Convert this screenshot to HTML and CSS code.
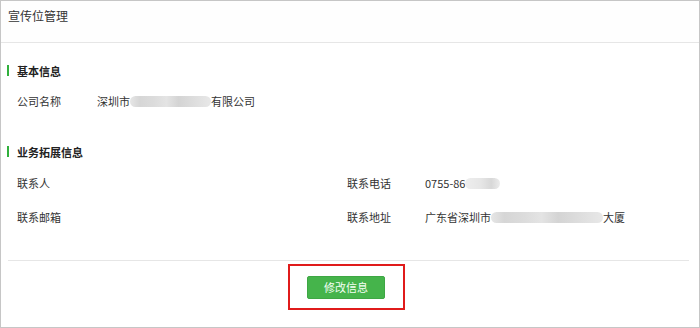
FILE: index.html
```html
<!DOCTYPE html>
<html lang="zh-CN">
<head>
<meta charset="utf-8">
<link rel="stylesheet" href="styles.css">
</head>
<body>
<div class="panel">
  <div class="header"><span class="title">宣传位管理</span></div>
  <div class="body">
    <div class="section-title sec1">基本信息</div>
    <div class="row r1">
      <div class="field">
        <span class="label">公司名称</span>
        <span class="value">深圳市<span class="blur b1"></span>有限公司</span>
      </div>
    </div>
    <div class="section-title sec2">业务拓展信息</div>
    <div class="grid">
      <div class="field">
        <span class="label">联系人</span>
        <span class="value"></span>
      </div>
      <div class="field">
        <span class="label">联系电话</span>
        <span class="value">0755-86<span class="blur b2"></span></span>
      </div>
      <div class="field">
        <span class="label">联系邮箱</span>
        <span class="value"></span>
      </div>
      <div class="field">
        <span class="label">联系地址</span>
        <span class="value">广东省深圳市<span class="blur b3"></span>大厦</span>
      </div>
    </div>
    <div class="divider"></div>
    <div class="actions">
      <div class="highlight">
        <button class="btn">修改信息</button>
      </div>
    </div>
  </div>
</div>
</body>
</html>
```

FILE: styles.css
```css
* { box-sizing: border-box; }
html, body {
  margin: 0;
  padding: 0;
  background: #fff;
}
body {
  font-family: "Noto Sans CJK SC", "Noto Sans", sans-serif;
  color: #333;
  font-size: 11px;
}
.panel {
  width: 700px;
  height: 328px;
  border: 1px solid #c6c6c6;
  background: #fff;
}
.header {
  height: 42px;
  border-bottom: 1px solid #e6e6e6;
  padding: 7px 0 0 7px;
  background: #fefefe;
}
.title {
  display: block;
  font-size: 12px;
  line-height: 16px;
  color: #333;
}
.body {
  padding: 0 10px 0 6px;
}
.section-title {
  position: relative;
  height: 20px;
  line-height: 20px;
  padding-left: 10px;
  font-weight: bold;
  font-size: 11px;
  color: #222;
}
.section-title::before {
  content: "";
  position: absolute;
  left: 0;
  top: 4px;
  width: 2px;
  height: 11px;
  background: #30b03c;
}
.sec1 { margin-top: 18px; }
.r1 { margin-top: 10px; }
.sec2 { margin-top: 31px; }
.row, .field {
  height: 20px;
  line-height: 20px;
}
.field {
  display: flex;
  padding-left: 10px;
}
.label {
  width: 80px;
  flex: none;
}
.value {
  display: flex;
  align-items: center;
}
.grid {
  margin-top: 11px;
  display: grid;
  grid-template-columns: 330px 1fr;
  row-gap: 14px;
}
.grid .field:nth-child(even) .label { width: 78px; }
.blur {
  display: inline-block;
  height: 11px;
  border-radius: 6px;
  background: linear-gradient(90deg, #e6e6e6 0%, #d6d6d6 12%, #dcdcdc 30%, #e4e4e4 45%, #d4d4d4 60%, #dedede 80%, #e8e8e8 100%);
}
.b1 { width: 81px; }
.b2 { width: 35px; background: linear-gradient(90deg, #eeeeee 0%, #e6e6e6 45%, #d8d8d8 75%, #ececec 100%); }
.b3 { width: 112px; }
.divider {
  margin-top: 33px;
  margin-left: 1px;
  width: 681px;
  height: 1px;
  background: #e6e6e6;
}
.actions {
  display: flex;
  justify-content: center;
  padding-top: 3px;
  padding-right: 4px;
}
.highlight {
  width: 117px;
  height: 46px;
  border: 2px solid #e01b1b;
  display: flex;
  align-items: center;
  justify-content: center;
  padding-top: 1px;
}
.btn {
  width: 78px;
  height: 23px;
  border: 1px solid #3ea744;
  border-radius: 2px;
  background: #45b44b;
  color: #f4fff4;
  font-family: "Noto Sans CJK SC", "Noto Sans", sans-serif;
  font-size: 11px;
  padding: 0;
  line-height: 21px;
}
```
